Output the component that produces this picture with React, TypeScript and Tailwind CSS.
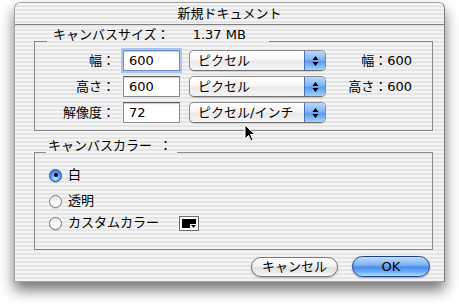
import React from "react";

const stripe =
  "bg-[repeating-linear-gradient(to_bottom,#f4f4f4_0px,#f4f4f4_2px,#e5e5e5_2px,#e5e5e5_4px)]";

function ArrowsIcon() {
  return (
    <svg width="7" height="12" viewBox="0 0 7 12">
      <path d="M3.5 1 L6.5 5 L0.5 5 Z" fill="#000" />
      <path d="M3.5 11 L6.5 7 L0.5 7 Z" fill="#000" />
    </svg>
  );
}

function Popup({ label }: { label: string }) {
  return (
    <div className="ml-[9px] flex h-[21px] w-[137px] overflow-hidden rounded-[5px] border border-[#8c8c8c] border-b-[#6f6f6f] bg-[linear-gradient(to_bottom,#ffffff_0%,#f7f7f7_45%,#e9e9e9_55%,#f6f6f6_100%)] shadow-[0_1px_1px_rgba(0,0,0,0.15)]">
      <div className="flex flex-1 items-center pl-[8px] leading-[19px]">{label}</div>
      <div className="flex w-[21px] items-center justify-center border-l border-[#4a6fb3] bg-[linear-gradient(to_bottom,#b9d8fb_0%,#80b5f4_45%,#5d9bef_55%,#9ed2ff_100%)]">
        <ArrowsIcon />
      </div>
    </div>
  );
}

function Field({ value, focused }: { value: string; focused?: boolean }) {
  return (
    <div
      className={
        focused
          ? "ml-[8px] flex h-[21px] w-[57px] items-center border border-[#6f8fc4] bg-white pl-[5px] leading-[19px] shadow-[0_0_0_2px_#a9c6ee,inset_0_1px_1px_rgba(0,0,0,0.2)]"
          : "ml-[8px] flex h-[21px] w-[57px] items-center border border-[#8a8a8a] border-t-[#5e5e5e] bg-white pl-[5px] leading-[19px] shadow-[inset_0_1px_1px_rgba(0,0,0,0.2)]"
      }
    >
      {value}
    </div>
  );
}

function Radio({ checked }: { checked?: boolean }) {
  if (checked) {
    return (
      <div className="flex h-[13px] w-[13px] items-center justify-center rounded-full border border-[#2a4f9c] bg-[radial-gradient(circle_at_50%_75%,#bfe6ff_0%,#5fa2f2_45%,#2f6fd8_100%)] shadow-[0_1px_1px_rgba(0,0,0,0.25)]">
        <div className="h-[4px] w-[4px] rounded-full bg-black" />
      </div>
    );
  }
  return (
    <div className="h-[13px] w-[13px] rounded-full border border-[#7d7d7d] bg-[linear-gradient(to_bottom,#e4e4e4_0%,#ffffff_60%,#f4f4f4_100%)] shadow-[0_1px_1px_rgba(0,0,0,0.15)]" />
  );
}

export default function App() {
  return (
    <div className="relative h-[305px] w-[459px] bg-white pl-[14px] pt-[2px] font-['DejaVu_Sans','Noto_Sans_CJK_JP',sans-serif] text-[13px] text-black">
      <div
        className={
          "flex h-[280px] w-[431px] flex-col rounded-t-[6px] border border-[#a3a3a3] border-r-[#7d7d7d] shadow-[0_8px_14px_rgba(0,0,0,0.55)] " +
          stripe
        }
      >
        {/* title bar */}
        <div className="flex h-[22px] items-center justify-center border-b border-[#7f7f7f] leading-[16px]">
          新規ドキュメント
        </div>

        <div className="flex flex-col pl-[19px]">
          {/* Group 1 heading */}
          <div className="mt-[3px] flex h-[14px] w-[399px] items-start leading-[14px]">
            <div className="mt-[13px] h-px w-[13px] bg-[#8a8a8a]" />
            <span className="ml-[6px]">キャンバスサイズ：</span>
            <span className="ml-[23px]">1.37 MB</span>
            <div className="ml-[23px] mt-[13px] h-px flex-1 bg-[#8a8a8a]" />
          </div>
          {/* Group 1 box */}
          <div className="flex h-[89px] w-[399px] flex-col gap-[5px] border-x border-b border-[#8a8a8a] pt-[8px]">
            <div className="flex h-[21px] items-center">
              <div className="w-[80px] text-right">幅：</div>
              <Field value="600" focused />
              <Popup label="ピクセル" />
              <div className="w-[86px] text-right">幅：600</div>
            </div>
            <div className="flex h-[21px] items-center">
              <div className="w-[80px] text-right">高さ：</div>
              <Field value="600" />
              <Popup label="ピクセル" />
              <div className="w-[86px] text-right">高さ：600</div>
            </div>
            <div className="flex h-[21px] items-center">
              <div className="w-[80px] text-right">解像度：</div>
              <Field value="72" />
              <Popup label="ピクセル/インチ" />
            </div>
          </div>

          {/* Group 2 heading */}
          <div className="mt-[8px] flex h-[14px] w-[399px] items-start leading-[14px]">
            <div className="mt-[13px] h-px w-[12px] bg-[#8a8a8a]" />
            <span className="ml-[2px]">キャンバスカラー</span>
            <span className="ml-[7px]">：</span>
            <div className="ml-[5px] mt-[13px] h-px flex-1 bg-[#8a8a8a]" />
          </div>
          {/* Group 2 box */}
          <div className="flex h-[97px] w-[399px] flex-col border-x border-b border-[#8a8a8a] pt-[12px]">
            <div className="flex h-[20px] items-center pl-[14px]">
              <Radio checked />
              <span className="ml-[6px]">白</span>
            </div>
            <div className="mt-[6px] flex h-[20px] items-center pl-[14px]">
              <Radio />
              <span className="ml-[6px]">透明</span>
            </div>
            <div className="mt-[2px] flex h-[20px] items-center pl-[14px]">
              <Radio />
              <span className="ml-[6px] w-[111px]">カスタムカラー</span>
              <div className="relative h-[15px] w-[20px] border border-[#6a6a6a] bg-white p-[2px]">
                <div className="h-full w-full bg-black" />
                <div className="absolute bottom-[1px] right-[1px] flex h-[5px] w-[7px] items-center justify-center bg-white">
                  <svg width="5" height="3" viewBox="0 0 5 3">
                    <path d="M0 0 L5 0 L2.5 3 Z" fill="#000" />
                  </svg>
                </div>
              </div>
            </div>
          </div>

          {/* Buttons */}
          <div className="mt-[6px] flex w-[396px] items-center justify-end gap-[14px]">
            <div className="flex h-[20px] w-[87px] items-center justify-center rounded-full border border-[#777777] bg-[linear-gradient(to_bottom,#ffffff_0%,#f2f2f2_45%,#e0e0e0_55%,#f8f8f8_100%)] leading-[16px] shadow-[0_1px_2px_rgba(0,0,0,0.25)]">
              キャンセル
            </div>
            <div className="flex h-[21px] w-[78px] items-center justify-center rounded-full border border-[#1f3f8f] bg-[linear-gradient(to_bottom,#c4defc_0%,#7fb4f5_40%,#4a8cec_55%,#6fb1fa_80%,#b4e2ff_100%)] leading-[16px] shadow-[0_1px_2px_rgba(0,0,0,0.3)]">
              OK
            </div>
          </div>
        </div>
      </div>

      {/* mouse cursor */}
      <svg
        className="absolute left-[244px] top-[124px]"
        width="12"
        height="18"
        viewBox="0 0 12 18"
      >
        <path
          d="M1 1 L1 15 L4.5 11.5 L7 17 L9 16 L6.5 10.5 L11 10.5 Z"
          fill="#000"
          stroke="#fff"
          strokeWidth="1"
        />
      </svg>
    </div>
  );
}
